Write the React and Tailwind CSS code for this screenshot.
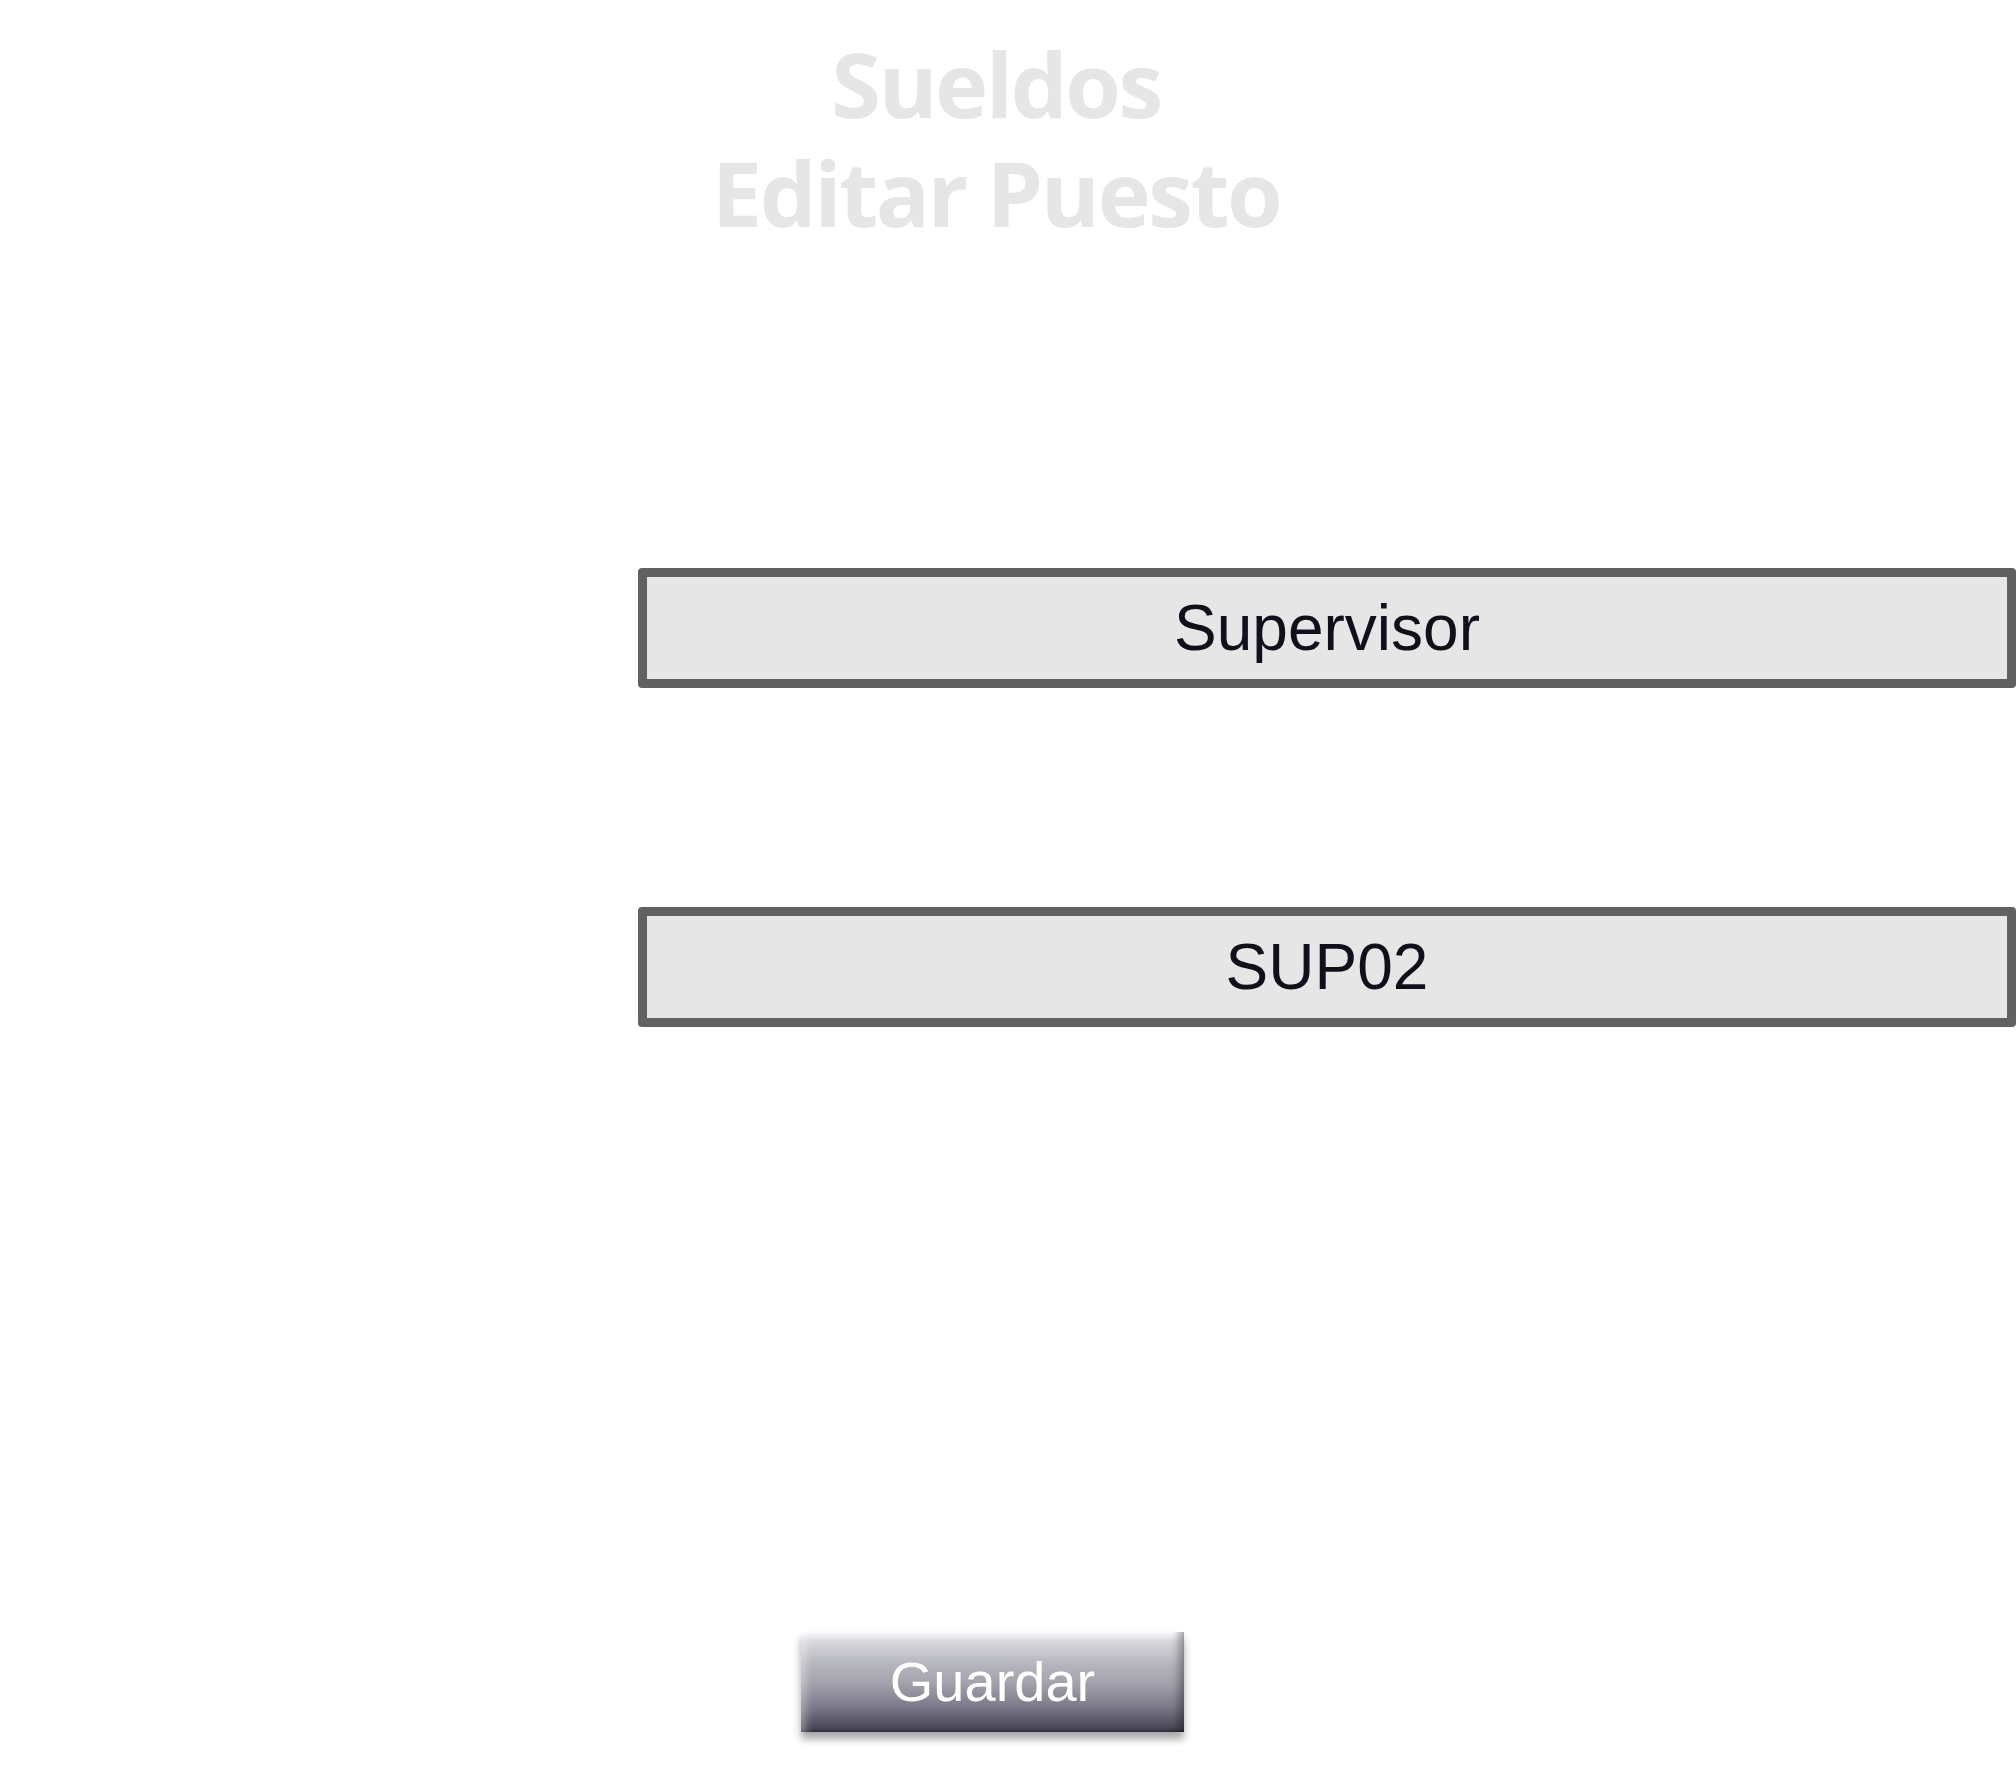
export default function App() {
  return (
    <div className="min-h-[1772px] w-[2016px] bg-white flex flex-col">
      <div
        className="w-[1992px] pt-[29px] text-center text-[90px] leading-[109px] tracking-[-2.5px] font-bold text-[#e6e6e6]"
        style={{ fontFamily: '"Open Sans", "Noto Sans", sans-serif' }}
      >
        Sueldos
        <br />
        Editar Puesto
      </div>

      <div className="mt-[321px] ml-[638px] flex flex-col gap-[219px]">
        <Field value="Supervisor" />
        <Field value="SUP02" />
      </div>

      <div className="mt-[605px] ml-[801px]">
        <button
          className="w-[383px] h-[100px] flex items-center justify-center text-white text-[56px] bg-[linear-gradient(to_bottom,#fbfbfc_0%,#d6d6dc_10%,#b8b8c0_30%,#a4a3ae_50%,#7c7a8a_75%,#4a4858_96%,#2e2c38_100%)] shadow-[inset_15px_0_8px_-10px_rgba(255,255,255,0.35),inset_-15px_0_8px_-10px_rgba(0,0,0,0.35),0_7px_8px_rgba(0,0,0,0.35)]"
          style={{ fontFamily: '"Liberation Sans", Arial, sans-serif' }}
        >
          Guardar
        </button>
      </div>
    </div>
  )
}

function Field({ value }) {
  return (
    <div
      className="w-[1378px] h-[120px] border-[9px] border-[#616161] rounded-[4px] bg-[#e6e6e6] flex items-center justify-center text-[64px] text-[#10101a]"
      style={{ fontFamily: '"Liberation Sans", Arial, sans-serif' }}
    >
      {value}
    </div>
  )
}
